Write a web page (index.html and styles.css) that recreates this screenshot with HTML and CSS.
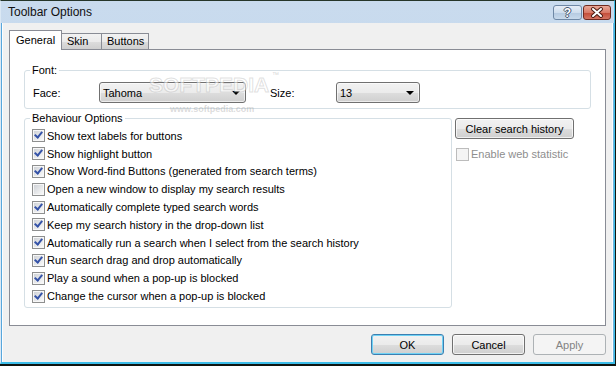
FILE: index.html
```html
<!DOCTYPE html>
<html lang="en">
<head>
  <meta charset="UTF-8">
  <link rel="stylesheet" href="styles.css">
</head>
<body>
  <div class="window">
    <div class="titlebar">
      <span class="title">Toolbar Options</span>
      <div class="caption-buttons">
        <span class="cap-btn help">?</span>
        <span class="cap-btn close">
          <svg width="26" height="13" viewBox="0 0 26 13">
            <path d="M9 3 L17 10 M17 3 L9 10" stroke="#4a1a12" stroke-width="4" stroke-linecap="round"/>
            <path d="M9 3 L17 10 M17 3 L9 10" stroke="#fff" stroke-width="2" stroke-linecap="round"/>
          </svg>
        </span>
      </div>
    </div>

    <div class="client">
      <div class="tabs">
        <span class="tab active">General</span>
        <span class="tab skin">Skin</span>
        <span class="tab buttons">Buttons</span>
      </div>

      <div class="panel">
        <fieldset class="group font-group">
          <legend>Font:</legend>
          <div class="font-row">
            <span class="field-label">Face:</span>
            <span class="combo face"><span>Tahoma</span><span class="arrow"></span></span>
            <span class="field-label size-label">Size:</span>
            <span class="combo size"><span>13</span><span class="arrow"></span></span>
          </div>
        </fieldset>

        <div class="lower">
          <fieldset class="group behaviour">
            <legend>Behaviour Options</legend>
            <div class="check"><span class="box checked"></span>Show text labels for buttons</div>
            <div class="check"><span class="box checked"></span>Show highlight button</div>
            <div class="check"><span class="box checked"></span>Show Word-find Buttons (generated from search terms)</div>
            <div class="check"><span class="box"></span>Open a new window to display my search results</div>
            <div class="check"><span class="box checked"></span>Automatically complete typed search words</div>
            <div class="check"><span class="box checked"></span>Keep my search history in the drop-down list</div>
            <div class="check"><span class="box checked"></span>Automatically run a search when I select from the search history</div>
            <div class="check"><span class="box checked"></span>Run search drag and drop automatically</div>
            <div class="check"><span class="box checked"></span>Play a sound when a pop-up is blocked</div>
            <div class="check"><span class="box checked"></span>Change the cursor when a pop-up is blocked</div>
          </fieldset>

          <div class="side">
            <button class="btn clear">Clear search history</button>
            <div class="check disabled"><span class="box"></span>Enable web statistic</div>
          </div>
        </div>

        <div class="watermark">SOFTPEDIA</div>
        <div class="watermark-tm">™</div>
        <div class="watermark-url">www.softpedia.com</div>
      </div>

      <div class="dialog-buttons">
        <button class="btn default">OK</button>
        <button class="btn">Cancel</button>
        <button class="btn" disabled>Apply</button>
      </div>
    </div>
  </div>
</body>
</html>
```

FILE: styles.css
```css
body {
  margin: 0;
  background-color: #101510;
  font-family: 'Liberation Sans', Arial, sans-serif;
  font-size: 11px;
  color: #000;
}
.window {
  width: 615px;
  height: 364px;
  box-sizing: border-box;
  border-top: 1px solid #26362a;
  border-left: 1px solid #dbe8f4;
  border-right: 1px solid #3ebfe8;
  border-bottom: 2px solid #3bbce8;
  background: linear-gradient(#c9dbee, #bcd1e8);
  display: flex;
  flex-direction: column;
}
.titlebar {
  height: 22px;
  flex: none;
  display: flex;
  align-items: center;
  padding: 0 3px 0 7px;
}
.title {
  font-size: 12px;
  color: #111;
}
.caption-buttons {
  margin-left: auto;
  align-self: flex-start;
  margin-top: 4px;
  display: flex;
  gap: 1px;
}
.cap-btn {
  height: 15px;
  box-sizing: border-box;
  border-radius: 3px;
  display: flex;
  align-items: center;
  justify-content: center;
}
.help {
  width: 29px;
  border: 1px solid #6f88a5;
  background: linear-gradient(#e6eef7 0%, #cfdeee 50%, #b4c9e0 51%, #c8daec 100%);
  color: #fff;
  font-weight: bold;
  font-size: 12px;
  text-shadow: 1px 0 #44566e, -1px 0 #44566e, 0 1px #44566e, 0 -1px #44566e;
}
.close {
  width: 28px;
  border: 1px solid #6f2a20;
  background: linear-gradient(#e9a898 0%, #d87a68 50%, #c24a36 51%, #d47462 100%);
}

.client {
  flex: 1;
  background-color: #f0f0f0;
  border-left: 1px solid #58a7dc;
  border-right: 1px solid #6fb3df;
  box-shadow: inset 1px 0 #fbfdff, inset -1px 0 #fbfdff;
  padding: 7px 7px 0 7px;
}

.tabs {
  display: flex;
  align-items: flex-end;
  height: 19px;
}
.tab {
  box-sizing: border-box;
  height: 16px;
  line-height: 15px;
  border: 1px solid #898c95;
  border-bottom: none;
  background: linear-gradient(#f2f2f2 0%, #ebebeb 50%, #dddddd 51%, #cfcfcf 100%);
  padding-left: 5px;
  margin-left: -1px;
}
.tab.active {
  position: relative;
  z-index: 1;
  height: 20px;
  line-height: 19px;
  margin-left: 0;
  margin-bottom: -1px;
  padding: 0 6px;
  width: 53px;
  background: #fff;
}
.tab.skin {
  width: 41px;
}
.tab.buttons {
  width: 48px;
}

.panel {
  position: relative;
  height: 277px;
  box-sizing: border-box;
  border: 1px solid #898c95;
  background-color: #fff;
  padding: 14px 13px 0 14px;
}

.group {
  margin: 0;
  border: 1px solid #d5dfe5;
  border-radius: 3px;
  padding: 0 7px;
  min-width: 0;
  box-sizing: border-box;
}
.group legend {
  padding: 0 2px;
  margin-left: -2px;
  line-height: 13px;
}
.font-group {
  width: 567px;
  padding-top: 5px;
  padding-bottom: 5px;
}
.font-row {
  display: flex;
  align-items: center;
  padding-left: 1px;
}
.field-label {
  width: 66px;
}
.size-label {
  margin-left: 24px;
}

.combo {
  display: flex;
  align-items: center;
  justify-content: space-between;
  height: 21px;
  box-sizing: border-box;
  border: 1px solid #707070;
  border-radius: 3px;
  padding: 0 5px 0 3px;
  background: linear-gradient(#f2f2f2 0%, #ebebeb 50%, #dddddd 51%, #cfcfcf 100%);
  box-shadow: inset 0 0 0 1px rgba(255, 255, 255, 0.6);
}
.combo.face {
  width: 147px;
}
.combo.size {
  width: 84px;
}
.arrow {
  width: 0;
  height: 0;
  border-left: 4px solid transparent;
  border-right: 4px solid transparent;
  border-top: 4px solid #000;
}

.lower {
  display: flex;
  margin-top: 3px;
  gap: 3px;
}
.behaviour {
  width: 428px;
  padding-top: 2px;
  padding-bottom: 2px;
}
.check {
  display: flex;
  align-items: center;
  height: 17.8px;
  gap: 2px;
  white-space: nowrap;
}
.box {
  position: relative;
  flex: none;
  width: 13px;
  height: 13px;
  box-sizing: border-box;
  border: 1px solid #8e8f8f;
  padding: 1px;
  background: linear-gradient(135deg, #cfd2d7, #f9f9f9) content-box, #f7f7f7;
}
.box.checked::after {
  content: "";
  position: absolute;
  left: 3px;
  top: 0;
  width: 3px;
  height: 6px;
  border-right: 2px solid #3553a8;
  border-bottom: 2px solid #3553a8;
  transform: rotate(40deg);
}

.side {
  padding-top: 6px;
  padding-left: 1px;
}
.side .check {
  margin-top: 8px;
  height: 14px;
}
.check.disabled {
  color: #8e8e8e;
}
.check.disabled .box {
  border-color: #bcbcbc;
  background: #f4f4f4;
}

.btn {
  font-family: inherit;
  font-size: 11px;
  color: #000;
  height: 21px;
  box-sizing: border-box;
  border: 1px solid #707070;
  border-radius: 3px;
  padding: 0;
  background: linear-gradient(#f2f2f2 0%, #ebebeb 50%, #dddddd 51%, #cfcfcf 100%);
  box-shadow: inset 0 0 0 1px rgba(255, 255, 255, 0.7);
}
.btn.clear {
  width: 119px;
  margin-left: -1px;
}
.btn.default {
  border-color: #3c7fb1;
  box-shadow: inset 0 0 0 1px #6fd2f5;
}
.btn:disabled {
  border-color: #adb2b5;
  background: #f4f4f4;
  color: #838383;
  box-shadow: none;
}

.dialog-buttons {
  display: flex;
  justify-content: flex-end;
  gap: 8px;
  margin-top: 8px;
}
.dialog-buttons .btn {
  width: 73px;
}

/* faint site watermark over the dialog */
.watermark {
  position: absolute;
  left: 139px;
  top: 24px;
  font-size: 21px;
  font-weight: bold;
  line-height: 21px;
  color: rgba(255, 255, 255, 0.55);
  -webkit-text-stroke: 1px rgba(150, 150, 150, 0.3);
  pointer-events: none;
}
.watermark-tm {
  position: absolute;
  left: 262px;
  top: 21px;
  font-size: 7px;
  line-height: 7px;
  color: rgba(150, 150, 150, 0.4);
  pointer-events: none;
}
.watermark-url {
  position: absolute;
  left: 160px;
  top: 54px;
  font-size: 9px;
  font-weight: bold;
  color: rgba(150, 150, 150, 0.35);
  pointer-events: none;
}
```
